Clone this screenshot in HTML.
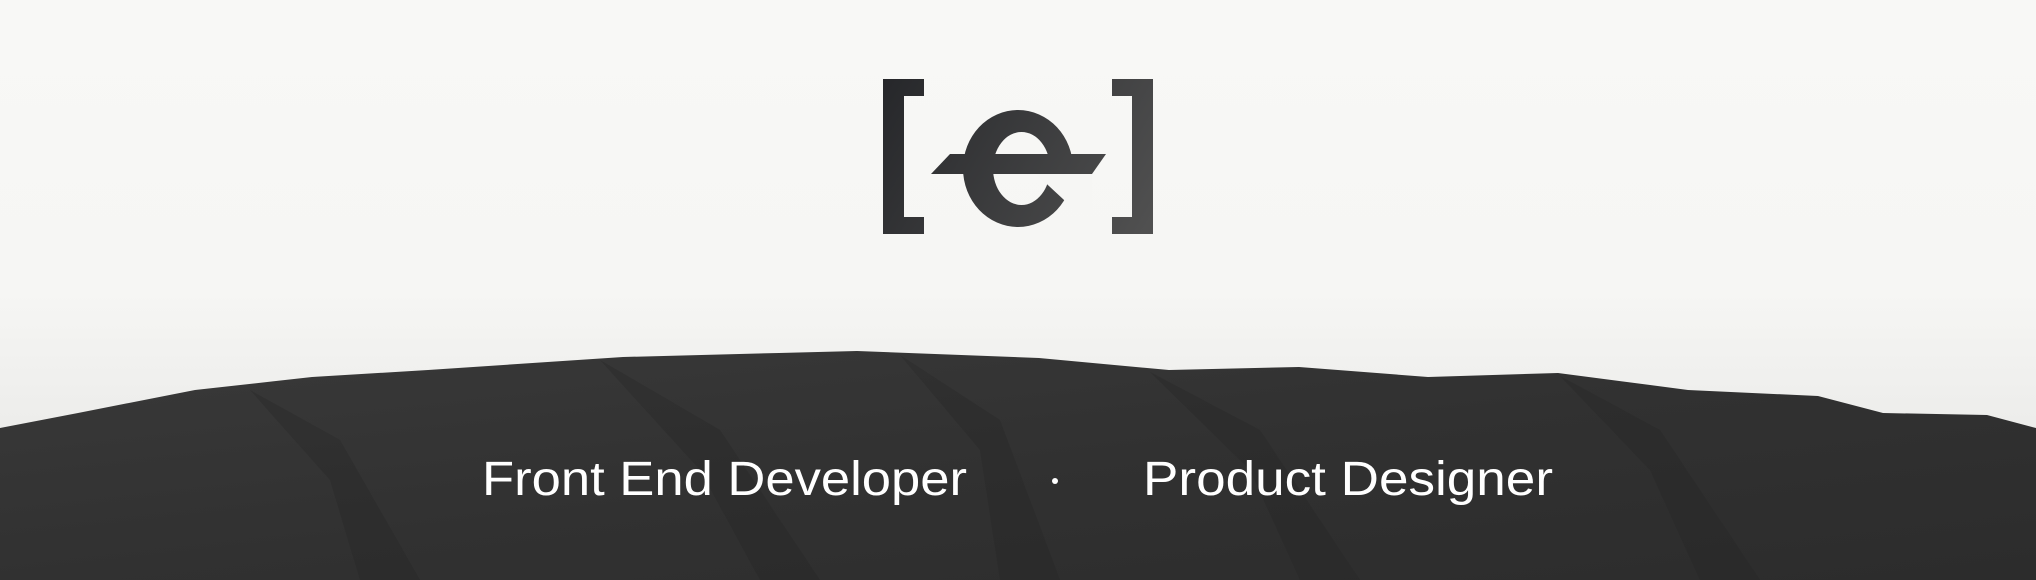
<!DOCTYPE html>
<html><head><meta charset="utf-8"><style>
html,body{margin:0;padding:0;width:2036px;height:580px;overflow:hidden;background:#f7f7f5}
svg{display:block}
</style></head><body>
<svg width="2036" height="580" viewBox="0 0 2036 580" xmlns="http://www.w3.org/2000/svg">
<defs>
<linearGradient id="sky" x1="0" y1="0" x2="0" y2="1">
<stop offset="0" stop-color="#f8f8f6"/><stop offset="0.5" stop-color="#f6f6f4"/><stop offset="0.75" stop-color="#ececea"/><stop offset="1" stop-color="#e4e4e2"/>
</linearGradient>
<linearGradient id="logo" gradientUnits="userSpaceOnUse" x1="883" y1="79" x2="1153" y2="234">
<stop offset="0" stop-color="#26272a"/><stop offset="1" stop-color="#515151"/>
</linearGradient>
<linearGradient id="dune" x1="0" y1="0" x2="1" y2="1">
<stop offset="0" stop-color="#393939"/><stop offset="0.5" stop-color="#313131"/><stop offset="1" stop-color="#2c2c2c"/>
</linearGradient>
</defs>
<rect width="2036" height="580" fill="url(#sky)"/>
<path d="M0,428 L78,413 L195,390 L312,377 L428,370 L623,357 L779,353 L857,351 L1039,358 L1169,370 L1299,367 L1428,377 L1558,373 L1688,390 L1818,396 L1883,413 L1987,415 L2036,428 L2036,580 L0,580 Z" fill="url(#dune)"/>
<g fill="#262626" opacity="0.3">
<path d="M600,360 L700,470 L760,580 L820,580 L720,430 Z"/>
<path d="M250,390 L330,480 L360,580 L420,580 L340,440 Z"/>
<path d="M1150,372 L1250,470 L1300,580 L1360,580 L1260,430 Z"/>
<path d="M1560,376 L1650,470 L1700,580 L1760,580 L1660,430 Z"/>
<path d="M900,355 L980,450 L1000,580 L1060,580 L1000,420 Z"/>
</g>
<g fill="url(#logo)">
<path d="M883,79 H924 V96 H904 V217 H924 V234 H883 Z"/>
<path d="M1112,79 H1153 V234 H1112 V217 H1132 V96 H1112 Z"/>
<path fill-rule="evenodd" d="M963,168.5 A55,58.5 0 1 0 1073,168.5 A55,58.5 0 1 0 963,168.5 Z M993,168.5 A28.5,36.5 0 1 0 1050,168.5 A28.5,36.5 0 1 0 993,168.5 Z"/>
</g>
<path d="M1036,174 L1092,174 L1092,214 L1077,212 Z" fill="#f6f6f4"/>
<path d="M931,174 L950,154 L1106,154 L1092,174 Z" fill="url(#logo)"/>
<g fill="#fff" font-family="Liberation Sans, sans-serif" font-size="48">
<text x="482" y="495" textLength="485" lengthAdjust="spacingAndGlyphs">Front End Developer</text>
<circle cx="1055" cy="481" r="3"/>
<text x="1143" y="495" textLength="410" lengthAdjust="spacingAndGlyphs">Product Designer</text>
</g>
</svg>
</body></html>
